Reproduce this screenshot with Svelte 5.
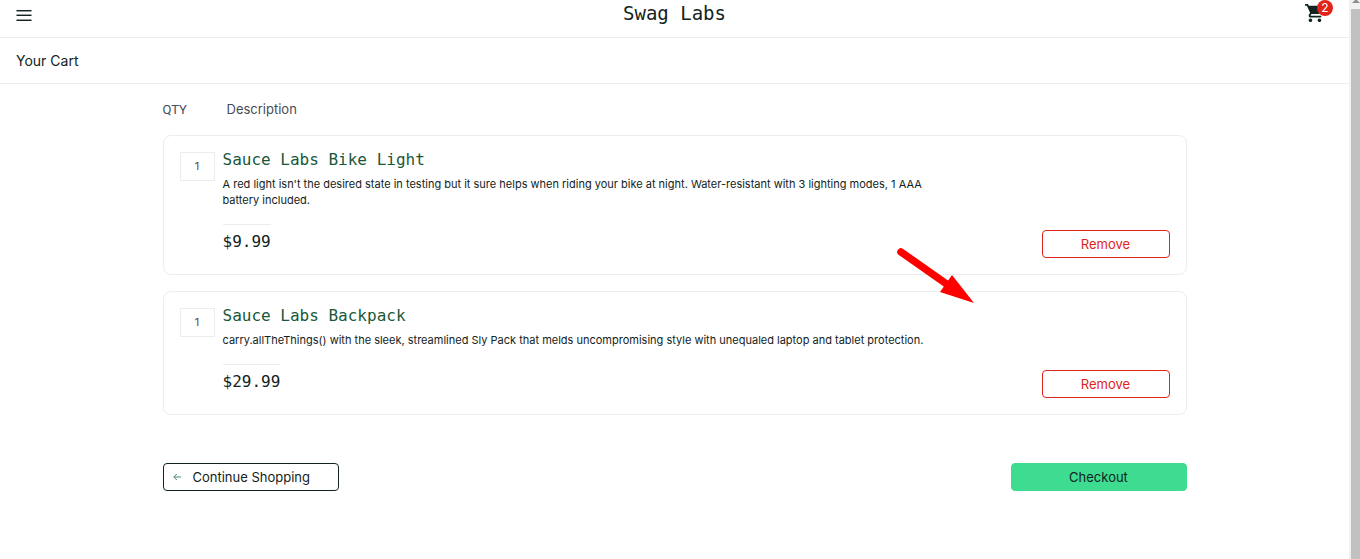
<script>
  const items = [
    {
      name: 'Sauce Labs Bike Light',
      text: "A red light isn't the desired state in testing but it sure helps when riding your bike at night. Water-resistant with 3 lighting modes, 1 AAA battery included.",
      price: '$9.99',
      qty: 1
    },
    {
      name: 'Sauce Labs Backpack',
      text: 'carry.allTheThings() with the sleek, streamlined Sly Pack that melds uncompromising style with unequaled laptop and tablet protection.',
      price: '$29.99',
      qty: 1
    }
  ];
</script>

<div class="page">
  <div class="content">
    <header class="topbar">
      <button class="menu" aria-label="Open menu">
        <svg width="16" height="12" viewBox="0 0 16 12">
          <path d="M.5 0h15v1H.5zM.5 5h15v1H.5zM.5 10h15v1H.5z" fill="#132322" />
          <path d="M.5 1h15v1H.5zM.5 4h15v1H.5zM.5 9h15v1H.5z" fill="#132322" opacity=".45" />
        </svg>
      </button>
      <h1>Swag Labs</h1>
      <a class="cart" href="#cart" aria-label="Shopping cart">
        <svg width="19" height="18" viewBox="1 2 21 20">
          <path
            fill="#132322"
            d="M7 18c-1.1 0-1.99.9-1.99 2S5.9 22 7 22s2-.9 2-2-.9-2-2-2zM1 2v2h2l3.6 7.59-1.35 2.45c-.16.28-.25.61-.25.96 0 1.1.9 2 2 2h12v-2H7.42c-.14 0-.25-.11-.25-.25l.03-.12.9-1.63h7.45c.75 0 1.41-.41 1.75-1.03l3.58-6.49c.08-.14.12-.31.12-.48 0-.55-.45-1-1-1H5.21l-.94-2H1zm16 16c-1.1 0-1.99.9-1.99 2s.89 2 1.99 2 2-.9 2-2-.9-2-2-2z"
          />
        </svg>
        <span class="badge">2</span>
      </a>
    </header>
    <div class="subbar"><h2>Your Cart</h2></div>

    <main>
      <div class="labels">
        <span class="qty-label">QTY</span>
        <span>Description</span>
      </div>
      <div class="list">
        {#each items as item}
          <article class="card">
            <div class="qty">{item.qty}</div>
            <div class="info">
              <a class="name" href="#item">{item.name}</a>
              <p>{item.text}</p>
              <div class="row">
                <div class="price">{item.price}</div>
                <button class="btn remove">Remove</button>
              </div>
            </div>
          </article>
        {/each}
      </div>
      <footer>
        <button class="btn back">
          <svg width="8" height="8" viewBox="0 0 8 8" fill="none" stroke="#4f8a75">
            <path d="M8 4H.8M3.8 1L.8 4l3 3" />
          </svg>
          Continue Shopping
        </button>
        <button class="btn checkout">Checkout</button>
      </footer>
    </main>
  </div>
  <div class="scroll" aria-hidden="true">
    <svg width="8" height="3" viewBox="0 0 8 3"><path d="M4-1L8 3H0z" fill="#8f8f8f" /></svg>
    <div class="thumb"></div>
  </div>

  <svg class="pointer" width="80" height="60" viewBox="0 0 80 60" aria-hidden="true">
    <path d="M7 8L54 41" stroke="#f00" stroke-width="7.5" stroke-linecap="round" />
    <path d="M58 31L80 59L46 48z" fill="#f00" />
  </svg>
</div>

<style>
  :global(body) {
    margin: 0;
    background: #fff;
  }
  .page {
    position: relative;
    display: flex;
    min-height: 100vh;
    color: #132322;
    font-family: Inter, sans-serif;
    font-size: 13px;
  }
  .content {
    flex: 1;
    min-width: 0;
  }
  .topbar {
    display: grid;
    grid-template-columns: 1fr auto 1fr;
    height: 37px;
    padding: 0 16px;
    border-bottom: 1px solid #ededed;
  }
  .menu {
    justify-self: start;
    align-self: start;
    padding: 10px 0 0;
    border: 0;
    background: none;
  }
  .menu svg,
  .cart svg {
    display: block;
  }
  h1 {
    margin: 0;
    font: 400 19px/26px 'DejaVu Sans Mono', monospace;
  }
  .cart {
    position: relative;
    justify-self: end;
    align-self: start;
    padding: 4px 9px 0 0;
  }
  .badge {
    position: absolute;
    top: 0;
    right: 0;
    width: 16px;
    border-radius: 8px;
    background: #e2231a;
    color: #fff;
    font-size: 12px;
    line-height: 16px;
    text-align: center;
  }
  .subbar {
    padding: 0 16px;
    border-bottom: 1px solid #ededed;
  }
  h2 {
    margin: 0;
    font-size: 14px;
    font-weight: 400;
    line-height: 45px;
  }
  main {
    max-width: 1024px;
    margin: 0 auto;
  }
  .labels {
    display: flex;
    color: #474c55;
    line-height: 51px;
  }
  .qty-label {
    width: 64px;
    font-family: Roboto, sans-serif;
  }
  .list {
    display: grid;
    gap: 16px;
  }
  .card {
    display: flex;
    align-items: flex-start;
    gap: 8px;
    padding: 16px;
    border: 1px solid #ededed;
    border-radius: 8px;
  }
  .qty {
    width: 33px;
    border: 1px solid #ededed;
    color: #5c4448;
    font-size: 11px;
    line-height: 27px;
    text-align: center;
  }
  .info {
    flex: 1;
  }
  .name {
    display: block;
    color: #18583a;
    font: 400 16px/16px 'DejaVu Sans Mono', monospace;
    text-decoration: none;
  }
  p {
    max-width: 704px;
    margin: 8px 0 16px;
    font-size: 11px;
    line-height: 16px;
  }
  .row {
    display: flex;
    align-items: flex-end;
    justify-content: space-between;
  }
  .price {
    border-top: 1px solid #ededed;
    font: 400 16px/33px 'DejaVu Sans Mono', monospace;
  }
  .btn {
    box-sizing: border-box;
    height: 28px;
    padding: 0;
    border: 1px solid #132322;
    border-radius: 4px;
    background: #fff;
    color: #132322;
    font: 400 13px/26px Inter, sans-serif;
  }
  .remove {
    width: 128px;
    border-color: #e2231a;
    color: #e2231a;
  }
  footer {
    display: flex;
    justify-content: space-between;
    padding: 48px 0;
  }
  .back {
    display: flex;
    align-items: center;
    gap: 12px;
    width: 176px;
    padding: 0 9px;
  }
  .checkout {
    width: 176px;
    border-color: #3ddc91;
    background: #3ddc91;
  }
  .scroll {
    display: flex;
    flex-direction: column;
    width: 9px;
    padding-left: 2px;
    background: #f1f1f1;
  }
  .scroll svg {
    align-self: center;
    margin-bottom: 6px;
  }
  .thumb {
    flex: 1;
    background: #c1c1c1;
  }
  .pointer {
    position: absolute;
    top: 244px;
    left: 894px;
  }
</style>
